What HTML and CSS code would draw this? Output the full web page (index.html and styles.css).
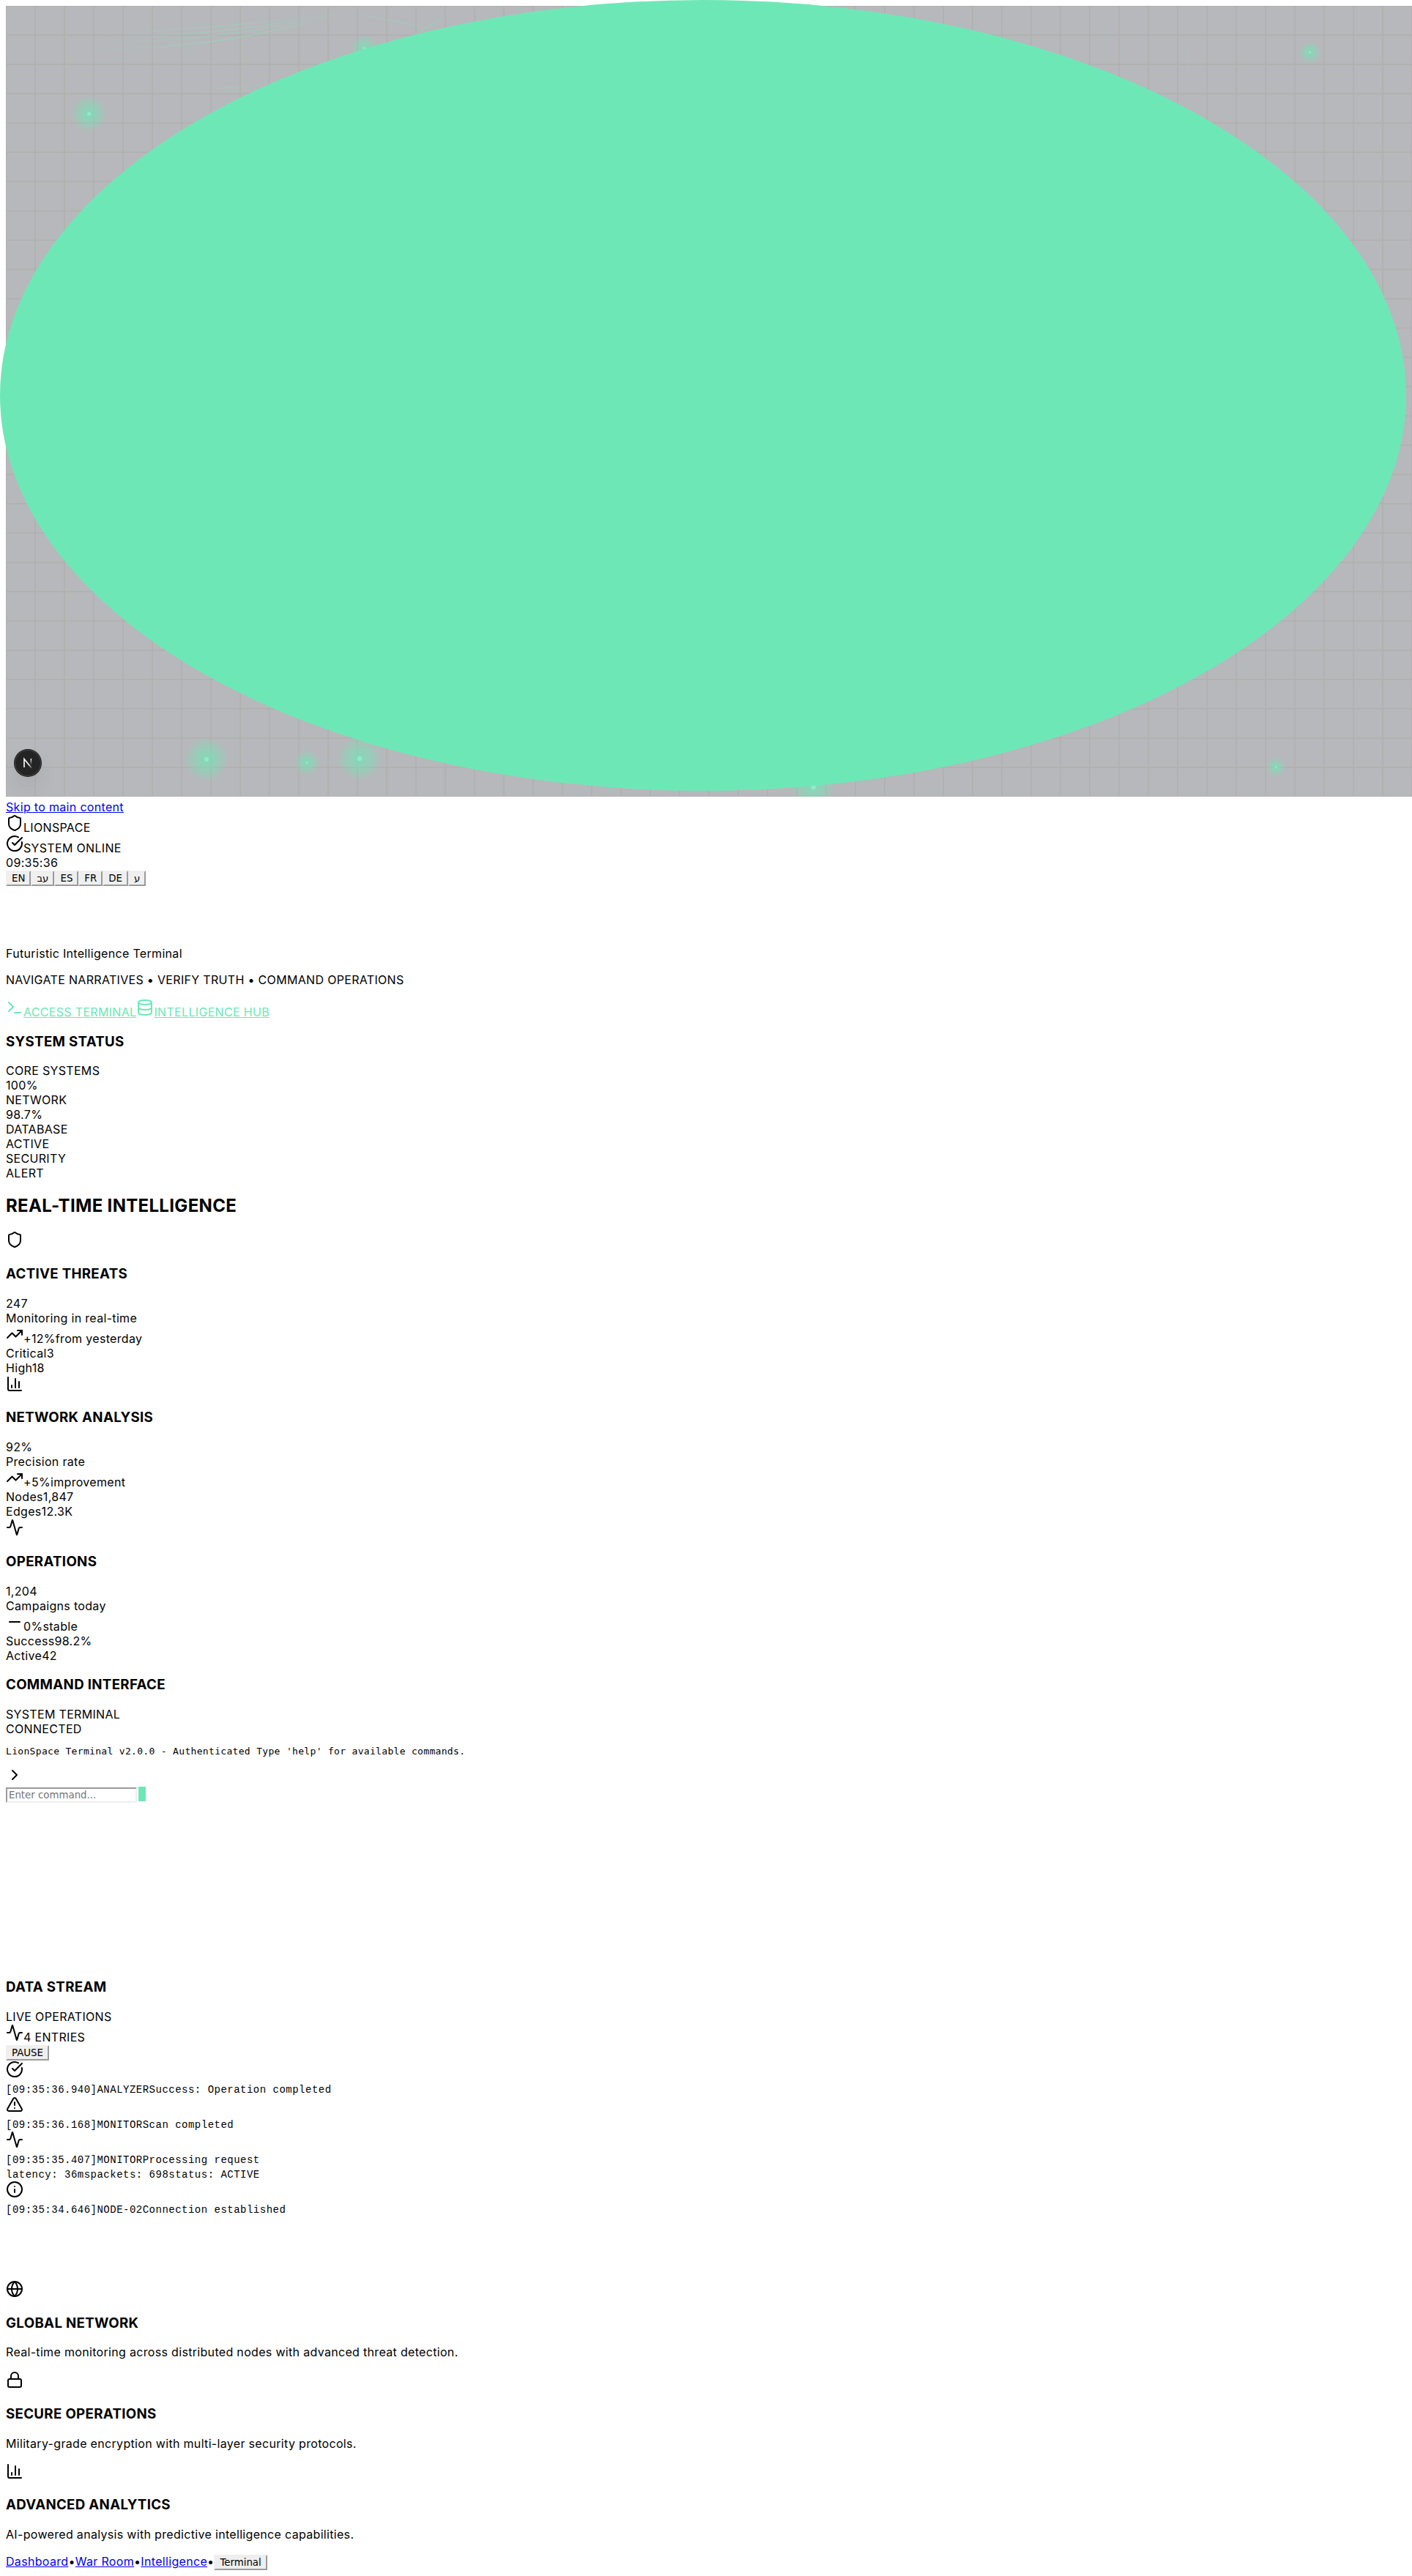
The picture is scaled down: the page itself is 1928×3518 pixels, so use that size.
FILE: index.html
```html
<!DOCTYPE html>
<html lang="en">
<head>
<meta charset="utf-8">
<title>LionSpace</title>
<link rel="stylesheet" href="styles.css">
</head>
<body>
<svg class="defs" width="0" height="0" aria-hidden="true">
  <symbol id="shield" viewBox="0 0 24 24"><path d="M20 13c0 5-3.5 7.5-7.66 8.95a1 1 0 0 1-.67-.01C7.5 20.5 4 18 4 13V6a1 1 0 0 1 1-1c2 0 4.5-1.2 6.24-2.72a1.17 1.17 0 0 1 1.52 0C14.51 3.81 17 5 19 5a1 1 0 0 1 1 1z"/></symbol>
  <symbol id="check" viewBox="0 0 24 24"><path d="M21.801 10A10 10 0 1 1 17 3.335"/><path d="m9 11 3 3L22 4"/></symbol>
  <symbol id="prompt" viewBox="0 0 24 24"><path d="m4 17 6-6-6-6"/><path d="M12 19h8"/></symbol>
  <symbol id="database" viewBox="0 0 24 24"><ellipse cx="12" cy="5" rx="9" ry="3"/><path d="M3 5v14a9 3 0 0 0 18 0V5"/><path d="M3 12a9 3 0 0 0 18 0"/></symbol>
  <symbol id="trend" viewBox="0 0 24 24"><path d="M16 7h6v6"/><path d="m22 7-8.5 8.5-5-5L2 17"/></symbol>
  <symbol id="chart" viewBox="0 0 24 24"><path d="M3 3v16a2 2 0 0 0 2 2h16"/><path d="M18 17V9"/><path d="M13 17V5"/><path d="M8 17v-3"/></symbol>
  <symbol id="activity" viewBox="0 0 24 24"><path d="M22 12h-2.48a2 2 0 0 0-1.93 1.46l-2.35 8.36a.25.25 0 0 1-.48 0L9.24 2.18a.25.25 0 0 0-.48 0l-2.35 8.36A2 2 0 0 1 4.49 12H2"/></symbol>
  <symbol id="minus" viewBox="0 0 24 24"><path d="M5 12h14"/></symbol>
  <symbol id="chevron" viewBox="0 0 24 24"><path d="m9 18 6-6-6-6"/></symbol>
  <symbol id="warning" viewBox="0 0 24 24"><path d="m21.73 18-8-14a2 2 0 0 0-3.48 0l-8 14A2 2 0 0 0 4 21h16a2 2 0 0 0 1.73-3"/><path d="M12 9v4"/><path d="M12 17h.01"/></symbol>
  <symbol id="info" viewBox="0 0 24 24"><circle cx="12" cy="12" r="10"/><path d="M12 16v-4"/><path d="M12 8h.01"/></symbol>
  <symbol id="globe" viewBox="0 0 24 24"><circle cx="12" cy="12" r="10"/><path d="M12 2a14.5 14.5 0 0 0 0 20 14.5 14.5 0 0 0 0-20"/><path d="M2 12h20"/></symbol>
  <symbol id="lock" viewBox="0 0 24 24"><rect x="3" y="11" width="18" height="11" rx="2"/><path d="M7 11V7a5 5 0 0 1 10 0v4"/></symbol>
</svg>

<div class="backdrop">
  <svg class="scene" width="1920" height="1080" viewBox="0 0 1920 1080">
    <defs>
      <pattern id="grid" width="40" height="40" patternUnits="userSpaceOnUse">
        <path d="M0 .5H40M0 39.5H40M.5 0V40M39.5 0V40" stroke="#b1b2b0" fill="none"/>
      </pattern>
      <radialGradient id="glow"><stop offset="0" stop-color="#6ee7b7" stop-opacity=".7"/><stop offset=".5" stop-color="#6ee7b7" stop-opacity=".42"/><stop offset="1" stop-color="#6ee7b7" stop-opacity=".04"/></radialGradient>
      <linearGradient id="beam"><stop offset="0" stop-color="#8fd8bd" stop-opacity="0"/><stop offset=".5" stop-color="#8fd8bd" stop-opacity=".75"/><stop offset="1" stop-color="#8fd8bd" stop-opacity="0"/></linearGradient>
    </defs>
    <rect width="1920" height="1080" fill="#b7b8bb"/>
    <rect width="1920" height="1080" fill="url(#grid)"/>
    <g fill="none" stroke="url(#beam)">
      <path d="M120 38Q310 32 470 6"/><path d="M120 44Q320 40 470 6"/><path d="M120 51Q320 47 470 6"/><path d="M110 59Q300 61 470 6" stroke-width="1.5"/>
      <path d="M460 7L600 34"/><path d="M540 50L615 5"/><path d="M160 8L330 108" stroke-opacity=".4"/>
      <path d="M260 114Q330 112 380 102" stroke-opacity=".6"/><path d="M260 117Q320 119 370 110" stroke-opacity=".6"/>
      <path d="M1340 45L1392 5" stroke-opacity=".4"/><path d="M1510 82L1540 40" stroke-opacity=".4"/><path d="M1500 82L1499 20" stroke-opacity=".4"/><path d="M1600 122L1660 40" stroke-opacity=".4"/><path d="M1612 130L1616 20" stroke-opacity=".4"/>
      <path d="M425 1034L480 1030" stroke-opacity=".6"/>
    </g>
    <g fill="url(#glow)">
      <circle cx="113.500" cy="147.500" r="24"/><circle cx="489.500" cy="58" r="18"/><circle cx="1780.500" cy="63.500" r="15"/>
      <circle cx="274" cy="1029" r="30"/><circle cx="411" cy="1033.500" r="17"/><circle cx="483" cy="1028" r="30"/>
      <circle cx="1102.500" cy="1067" r="29"/><circle cx="1734" cy="1039.500" r="13"/>
    </g>
    <g fill="#8eecc8">
      <circle cx="113.500" cy="147.500" r="2.500"/><circle cx="489.500" cy="58" r="2"/><circle cx="1780.500" cy="63.500" r="1.500"/>
      <circle cx="274" cy="1029" r="3"/><circle cx="411" cy="1033.500" r="1.500"/><circle cx="483" cy="1028" r="3.200"/>
      <circle cx="1102.500" cy="1067" r="3.500"/><circle cx="1734" cy="1039.500" r="1.500"/>
    </g>
  </svg>
  <div class="orb"></div>
  <div class="badge"><svg width="36" height="36" viewBox="0 0 36 36" fill="none"><defs><linearGradient id="fadeA" x1="14" y1="13" x2="23" y2="25" gradientUnits="userSpaceOnUse"><stop offset=".6" stop-color="#fff"/><stop offset="1" stop-color="#fff" stop-opacity=".2"/></linearGradient><linearGradient id="fadeB" x1="0" y1="12" x2="0" y2="21" gradientUnits="userSpaceOnUse"><stop stop-color="#fff"/><stop offset="1" stop-color="#fff" stop-opacity="0"/></linearGradient></defs><path d="M13 24V12.600L23.200 25" stroke="url(#fadeA)" stroke-width="1.600"/><path d="M22.400 12v9" stroke="url(#fadeB)" stroke-width="1.600"/></svg></div>
</div>

<a class="skip" href="#main">Skip to main content</a>
<header>
  <div><svg class="icon"><use href="#shield"/></svg><span>LIONSPACE</span></div>
  <div><svg class="icon"><use href="#check"/></svg><span>SYSTEM ONLINE</span></div>
  <div>09:35:36</div>
  <div class="langs"><button>EN</button><button>עב</button><button>ES</button><button>FR</button><button>DE</button><button>ע</button></div>
</header>

<main id="main">
  <section class="hero">
    <p>Futuristic Intelligence Terminal</p>
    <p>NAVIGATE NARRATIVES • VERIFY TRUTH • COMMAND OPERATIONS</p>
    <div><a class="cta" href="#terminal"><svg class="icon"><use href="#prompt"/></svg><span>ACCESS TERMINAL</span></a><a class="cta" href="#hub"><svg class="icon"><use href="#database"/></svg><span>INTELLIGENCE HUB</span></a></div>
  </section>
  <section>
    <h3>SYSTEM STATUS</h3>
    <div>CORE SYSTEMS</div><div>100%</div>
    <div>NETWORK</div><div>98.7%</div>
    <div>DATABASE</div><div>ACTIVE</div>
    <div>SECURITY</div><div>ALERT</div>
  </section>
  <section>
    <h2>REAL-TIME INTELLIGENCE</h2>
    <article>
      <div><svg class="icon"><use href="#shield"/></svg></div>
      <h3>ACTIVE THREATS</h3>
      <div>247</div><div>Monitoring in real-time</div>
      <div><svg class="icon"><use href="#trend"/></svg><span>+12%</span><span>from yesterday</span></div>
      <div>Critical3</div><div>High18</div>
    </article>
    <article>
      <div><svg class="icon"><use href="#chart"/></svg></div>
      <h3>NETWORK ANALYSIS</h3>
      <div>92%</div><div>Precision rate</div>
      <div><svg class="icon"><use href="#trend"/></svg><span>+5%</span><span>improvement</span></div>
      <div>Nodes1,847</div><div>Edges12.3K</div>
    </article>
    <article>
      <div><svg class="icon"><use href="#activity"/></svg></div>
      <h3>OPERATIONS</h3>
      <div>1,204</div><div>Campaigns today</div>
      <div><svg class="icon"><use href="#minus"/></svg><span>0%</span><span>stable</span></div>
      <div>Success98.2%</div><div>Active42</div>
    </article>
  </section>
  <section class="terminal" id="terminal">
    <h3>COMMAND INTERFACE</h3>
    <div>SYSTEM TERMINAL</div><div>CONNECTED</div>
    <pre>LionSpace Terminal v2.0.0 - Authenticated Type 'help' for available commands.</pre>
    <div><svg class="icon"><use href="#chevron"/></svg></div>
    <div class="entry"><input type="text" placeholder="Enter command..."><span class="caret"></span></div>
  </section>
  <section class="stream">
    <h3>DATA STREAM</h3>
    <div>LIVE OPERATIONS</div>
    <div><svg class="icon"><use href="#activity"/></svg><span>4 ENTRIES</span></div>
    <div class="pause"><button>PAUSE</button></div>
    <div><svg class="icon"><use href="#check"/></svg></div>
    <div class="log">[09:35:36.940]ANALYZERSuccess: Operation completed</div>
    <div><svg class="icon"><use href="#warning"/></svg></div>
    <div class="log">[09:35:36.168]MONITORScan completed</div>
    <div><svg class="icon"><use href="#activity"/></svg></div>
    <div class="log">[09:35:35.407]MONITORProcessing request</div>
    <div class="log">latency: 36mspackets: 698status: ACTIVE</div>
    <div><svg class="icon"><use href="#info"/></svg></div>
    <div class="log">[09:35:34.646]NODE-02Connection established</div>
  </section>
  <section>
    <div><svg class="icon"><use href="#globe"/></svg></div>
    <h3>GLOBAL NETWORK</h3>
    <p>Real-time monitoring across distributed nodes with advanced threat detection.</p>
    <div><svg class="icon"><use href="#lock"/></svg></div>
    <h3>SECURE OPERATIONS</h3>
    <p>Military-grade encryption with multi-layer security protocols.</p>
    <div><svg class="icon"><use href="#chart"/></svg></div>
    <h3>ADVANCED ANALYTICS</h3>
    <p>AI-powered analysis with predictive intelligence capabilities.</p>
  </section>
</main>
<footer><a href="#dash">Dashboard</a><span>•</span><a href="#war">War Room</a><span>•</span><a href="#hub">Intelligence</a><span>•</span><button>Terminal</button></footer>
</body>
</html>
```
FILE: styles.css
```css
body {
  margin: 0;
  padding: 8px;
  font: 16px/20px Inter, sans-serif;
  letter-spacing: 0.32px;
  color: #000;
  background: #fff;
}

.defs { position: absolute; }

.backdrop { position: relative; height: 1080px; }

.scene { display: block; }

.orb {
  position: absolute;
  top: -8px;
  left: -8px;
  width: 1920px;
  height: 1080px;
  border-radius: 50%;
  background: #6ee7b7;
}

.badge {
  position: absolute;
  left: 12px;
  top: 1016px;
  width: 36px;
  height: 36px;
  border-radius: 50%;
  background: #242424;
  box-shadow: 0 0 0 1px #171717, inset 0 0 0 1px #454545, 0 16px 32px -8px rgba(0, 0, 0, .24);
}

.badge svg { display: block; }

.skip { display: block; width: max-content; margin-top: 4px; }

a { color: #00e; }

.icon {
  width: 24px;
  height: 24px;
  fill: none;
  stroke: currentColor;
  stroke-width: 2;
  stroke-linecap: round;
  stroke-linejoin: round;
}

h2 { margin: 20px 0; font-size: 24px; line-height: 29px; }

h3 { margin: 18.7px 0; font-size: 18.7px; line-height: 23px; }

p { margin: 16px 0; }

button {
  font: 13.333px "DejaVu Sans", sans-serif;
  height: 21px;
  padding: 1px 6px;
  border: 2px outset #efefef;
  background: #efefef;
  color: #000;
}

.langs { display: flex; height: 21px; margin-top: 1px; }

.hero { padding-top: 66px; }

.cta { color: #6ee7b7; }

.terminal { height: 394.5px; }

pre { margin: 13px 0 12px; font: 13px/16px "DejaVu Sans Mono", monospace; }

.entry { display: flex; gap: 2px; }

input {
  width: 179px;
  height: 21px;
  margin: 1px 0 0;
  box-sizing: border-box;
  padding: 1px 2px;
  border: 2px inset #efefef;
  font: 13.333px "DejaVu Sans", sans-serif;
}

input::placeholder { color: #757575; }

.caret { width: 10px; height: 20px; background: #6ee7b7; }

.stream { height: 411.5px; }

.pause { display: flex; height: 21px; padding-top: 1px; }

.log {
  box-sizing: border-box;
  height: 20px;
  padding-top: 2px;
  font-family: "Liberation Mono", monospace;
  font-size: 14px;
  letter-spacing: 0.49px;
}

footer { padding-top: 1px; }
```
